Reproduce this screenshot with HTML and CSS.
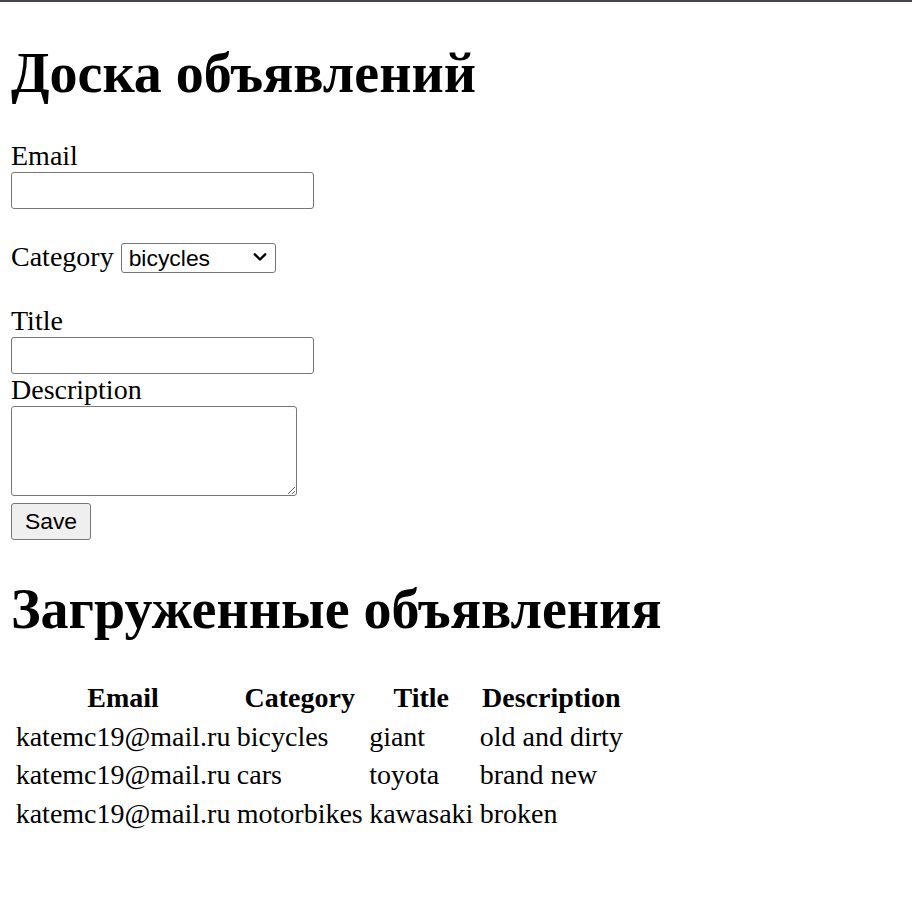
FILE: index.html
```html
<!DOCTYPE html>
<html lang="ru">
<head>
<meta charset="utf-8">
<title>Доска объявлений</title>
<link rel="stylesheet" href="styles.css">
</head>
<body>
<h1 class="title">Доска объявлений</h1>
<form class="ad-form">
  <label class="field-label" for="email">Email</label>
  <input class="text-input" id="email" type="text">
  <p class="category-row">
    <label for="category">Category</label>
    <span class="select-wrap">
      <select class="category-select" id="category">
        <option>bicycles</option>
        <option>cars</option>
        <option>motorbikes</option>
      </select>
      <svg class="select-arrow" width="14" height="10" viewBox="0 0 14 10" aria-hidden="true"><path d="M1.8 2.3 L7 7.5 L12.2 2.3" fill="none" stroke="#000" stroke-width="2.4" stroke-linecap="round" stroke-linejoin="round"/></svg>
    </span>
  </p>
  <label class="field-label" for="title">Title</label>
  <input class="text-input" id="title" type="text">
  <label class="field-label" for="description">Description</label>
  <textarea class="text-area" id="description"></textarea>
  <button class="save-btn" type="button">Save</button>
</form>
<h1 class="title">Загруженные объявления</h1>
<table class="ads">
  <thead>
    <tr><th>Email</th><th>Category</th><th>Title</th><th>Description</th></tr>
  </thead>
  <tbody>
    <tr><td>katemc19@mail.ru</td><td>bicycles</td><td>giant</td><td>old and dirty</td></tr>
    <tr><td>katemc19@mail.ru</td><td>cars</td><td>toyota</td><td>brand new</td></tr>
    <tr><td>katemc19@mail.ru</td><td>motorbikes</td><td>kawasaki</td><td>broken</td></tr>
  </tbody>
</table>
</body>
</html>
```
FILE: styles.css
```css
html {
  border-top: 2px solid #45454f;
  background: #fff;
}
body {
  margin: 0;
  padding: 0 11px;
  font-family: "Liberation Serif", "Times New Roman", serif;
  font-size: 28px;
  line-height: 32px;
  color: #000;
}
.title {
  font-size: 56px;
  line-height: 63px;
  font-weight: bold;
  margin: 40px 0 35px;
}
.ad-form {
  margin: 0;
}
.field-label {
  display: block;
}
.text-input {
  display: block;
  box-sizing: border-box;
  width: 303px;
  height: 37px;
  margin: 0;
  padding: 2px 4px;
  border: 1px solid #767676;
  border-radius: 3px;
  font-family: "Liberation Sans", Arial, sans-serif;
  font-size: 22.9px;
}
.category-row {
  margin: 32px 0 32px;
  line-height: 32px;
}
.select-wrap {
  position: relative;
  display: inline-block;
}
.category-select {
  appearance: none;
  -webkit-appearance: none;
  box-sizing: border-box;
  width: 155px;
  height: 30px;
  margin: 0;
  padding: 0 30px 0 7px;
  border: 1px solid #767676;
  border-radius: 3px;
  background: #fff;
  font-family: "Liberation Sans", Arial, sans-serif;
  font-size: 22.9px;
  color: #000;
  vertical-align: baseline;
}
.select-arrow {
  position: absolute;
  right: 9px;
  top: 50%;
  margin-top: -5px;
  pointer-events: none;
}
.text-area {
  display: block;
  box-sizing: border-box;
  width: 286px;
  height: 90px;
  margin: 0 0 7px;
  padding: 2px;
  border: 1px solid #767676;
  border-radius: 3px;
  font-family: "Liberation Mono", monospace;
  font-size: 22.9px;
}
.save-btn {
  display: block;
  box-sizing: border-box;
  width: 80px;
  height: 37px;
  margin: 0;
  padding: 0;
  border: 1px solid #767676;
  border-radius: 3px;
  background: #efefef;
  font-family: "Liberation Sans", Arial, sans-serif;
  font-size: 22.9px;
  color: #000;
}
.ad-form + .title {
  margin-top: 38px;
  margin-bottom: 36px;
}
.ads {
  border-spacing: 3.4px;
}
.ads th,
.ads td {
  padding: 1.7px;
  font-size: 28px;
  line-height: 32.5px;
}
.ads th {
  font-weight: bold;
  text-align: center;
}
.ads td {
  text-align: left;
}
```
